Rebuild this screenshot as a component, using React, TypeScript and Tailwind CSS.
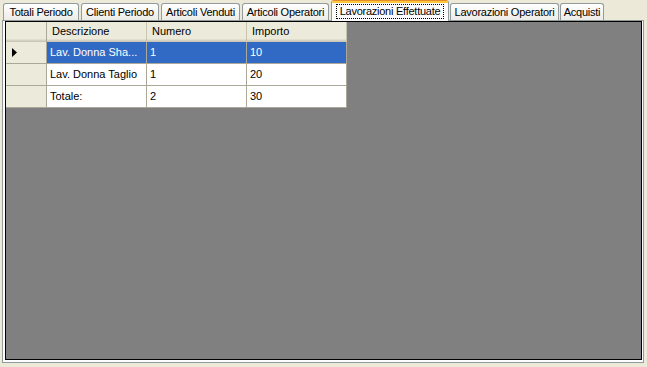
import React from 'react';

interface Tab {
    label: string;
    width: number;
    ml: string;
    active?: boolean;
}

const tabs: Tab[] = [
    { label: 'Totali Periodo', width: 76, ml: 'ml-[3px]' },
    { label: 'Clienti Periodo', width: 78, ml: 'ml-[2px]' },
    { label: 'Articoli Venduti', width: 79, ml: 'ml-[2px]' },
    { label: 'Articoli Operatori', width: 87, ml: 'ml-[2px]' },
    { label: 'Lavorazioni Effettuate', width: 118, ml: 'ml-[2px]', active: true },
    { label: 'Lavorazioni Operatori', width: 109, ml: 'ml-px' },
    { label: 'Acquisti', width: 44, ml: 'ml-px' },
];

const rows = [
    { descr: 'Lav. Donna Sha...', numero: '1', importo: '10', selected: true },
    { descr: 'Lav. Donna Taglio', numero: '1', importo: '20' },
    { descr: 'Totale:', numero: '2', importo: '30' },
];

const headerBg = 'bg-[#EBEADB] shadow-[inset_0_-1px_0_#CBC7B8,inset_0_-2px_0_#D6D2C2,inset_0_-3px_0_#E2DECD]';

export default function App() {
    return (
        <div className="w-[647px] h-[367px] bg-[#ECE9D8] text-[11px] text-black overflow-hidden" style={{ fontFamily: '"Liberation Sans", Arial, sans-serif' }}>
            {/* Tab strip */}
            <div className="flex items-end h-[20px] tracking-[-0.25px]">
                {tabs.map((t) =>
                    t.active ? (
                        <div
                            key={t.label}
                            style={{ width: t.width }}
                            className={`${t.ml} relative z-10 -mb-px h-[21px] flex flex-col border-x border-[#919B9C] rounded-t-[3px] bg-[#FCFCFE] overflow-hidden`}
                        >
                            <div className="h-[3px] shrink-0 bg-[#FFC73C] border-t border-[#E68B2C]" />
                            <div className="flex-1 flex items-start justify-center pt-px">
                                <span className="border border-dotted border-black px-[3px] leading-[13px]">{t.label}</span>
                            </div>
                        </div>
                    ) : (
                        <div
                            key={t.label}
                            style={{ width: t.width }}
                            className={`${t.ml} h-[17px] flex items-center justify-center border border-b-0 border-[#919B9C] rounded-t-[3px] bg-gradient-to-b from-white to-[#ECEBE6] whitespace-nowrap pt-px`}
                        >
                            {t.label}
                        </div>
                    )
                )}
            </div>

            {/* Tab page */}
            <div className="ml-[2px] w-[642px] h-[343px] border border-[#919B9C] bg-[#FCFCFE] pl-[2px] pr-px pb-[2px] flex">
                <div className="flex-1 border border-black bg-[#808080]">
                    {/* Column headers */}
                    <div className="flex h-[20px]">
                        <div className={`w-[41px] border-r border-[#ACA899] ${headerBg}`} />
                        {['Descrizione', 'Numero', 'Importo'].map((h) => (
                            <div key={h} className={`w-[100px] border-r border-[#C7C5B2] pl-[5px] flex items-center pb-px ${headerBg}`}>
                                {h}
                            </div>
                        ))}
                    </div>

                    {/* Rows */}
                    {rows.map((r) => (
                        <div key={r.descr} className="flex h-[22px]">
                            <div className="w-[41px] bg-[#EBEADB] border-r border-b border-[#ACA899] flex items-center pl-[6px]">
                                {r.selected && (
                                    <svg width="5" height="9" viewBox="0 0 5 9">
                                        <path d="M0 0 L5 4.5 L0 9 Z" fill="#000" />
                                    </svg>
                                )}
                            </div>
                            {[r.descr, r.numero, r.importo].map((v, i) => (
                                <div
                                    key={i}
                                    className={`w-[100px] border-r border-b border-[#ACA899] pl-[3px] flex items-center whitespace-nowrap ${
                                        r.selected ? 'bg-[#316AC5] text-white' : 'bg-white'
                                    }`}
                                >
                                    {v}
                                </div>
                            ))}
                        </div>
                    ))}
                </div>
            </div>
        </div>
    );
}
